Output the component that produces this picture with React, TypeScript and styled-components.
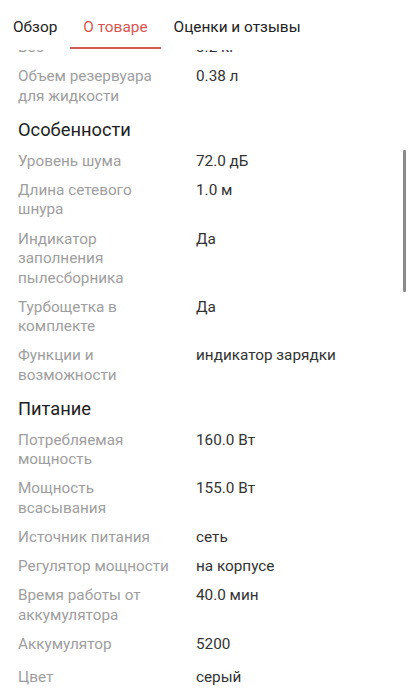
import React from "react";
import styled, { createGlobalStyle } from "styled-components";

const GlobalStyle = createGlobalStyle`
  html, body { margin: 0; padding: 0; background: #ffffff; }
  body { font-family: Roboto, "Noto Sans", "Liberation Sans", sans-serif; }
  * { box-sizing: border-box; }
`;

const Screen = styled.div`
  position: relative;
  width: 410px;
  height: 699px;
  display: flex;
  flex-direction: column;
  overflow: hidden;
  background: #fff;
`;

const TabBar = styled.div`
  flex: none;
  height: 50px;
  display: flex;
  align-items: flex-start;
  background: #fff;
  position: relative;
  z-index: 1;
`;

const Tab = styled.div<{ $active?: boolean }>`
  padding: 6px 13px 0;
  height: 49px;
  display: flex;
  align-items: center;
  font-size: 15.4px;
  line-height: 20px;
  color: ${(p) => (p.$active ? "#d9544f" : "#222222")};
  border-bottom: 2px solid ${(p) => (p.$active ? "#cf5a58" : "transparent")};
`;

const ScrollArea = styled.div`
  flex: 1;
  overflow: hidden;
`;

const List = styled.div`
  margin-top: -16.6px;
  padding: 0 18px;
`;

const Row = styled.div<{ $extra?: number }>`
  display: grid;
  grid-template-columns: 160px 1fr;
  column-gap: 18px;
  padding: 4.85px 0;
  margin-top: ${(p) => p.$extra ?? 0}px;
  font-size: 15.3px;
  line-height: 19.5px;
`;

const Label = styled.div`
  color: #9e9e9e;
`;

const Value = styled.div`
  color: #333333;
`;

const Heading = styled.div`
  font-size: 18.3px;
  line-height: 24px;
  color: #212121;
  padding: 6.5px 0 5px;
`;

const Thumb = styled.div`
  position: absolute;
  right: 4px;
  top: 150px;
  width: 3px;
  height: 142px;
  background: #8a8a8a;
  border-radius: 1px;
`;

type Item = { label: string; value: string; extra?: number };
type Section = { title?: string; items: Item[] };

const sections: Section[] = [
  {
    items: [
      { label: "Вес", value: "3.2 кг" },
      { label: "Объем резервуара для жидкости", value: "0.38 л" },
    ],
  },
  {
    title: "Особенности",
    items: [
      { label: "Уровень шума", value: "72.0 дБ" },
      { label: "Длина сетевого шнура", value: "1.0 м" },
      { label: "Индикатор заполнения пылесборника", value: "Да" },
      { label: "Турбощетка в комплекте", value: "Да" },
      { label: "Функции и возможности", value: "индикатор зарядки" },
    ],
  },
  {
    title: "Питание",
    items: [
      { label: "Потребляемая мощность", value: "160.0 Вт" },
      { label: "Мощность всасывания", value: "155.0 Вт" },
      { label: "Источник питания", value: "сеть" },
      { label: "Регулятор мощности", value: "на корпусе" },
      { label: "Время работы от аккумулятора", value: "40.0 мин" },
      { label: "Аккумулятор", value: "5200" },
      { label: "Цвет", value: "серый", extra: 4 },
    ],
  },
];

export default function App() {
  return (
    <>
      <GlobalStyle />
      <Screen>
        <TabBar>
          <Tab>Обзор</Tab>
          <Tab $active>О товаре</Tab>
          <Tab>Оценки и отзывы</Tab>
        </TabBar>
        <ScrollArea>
          <List>
            {sections.map((s, i) => (
              <React.Fragment key={i}>
                {s.title && <Heading>{s.title}</Heading>}
                {s.items.map((it) => (
                  <Row key={it.label} $extra={it.extra}>
                    <Label>{it.label}</Label>
                    <Value>{it.value}</Value>
                  </Row>
                ))}
              </React.Fragment>
            ))}
          </List>
        </ScrollArea>
        <Thumb />
      </Screen>
    </>
  );
}
